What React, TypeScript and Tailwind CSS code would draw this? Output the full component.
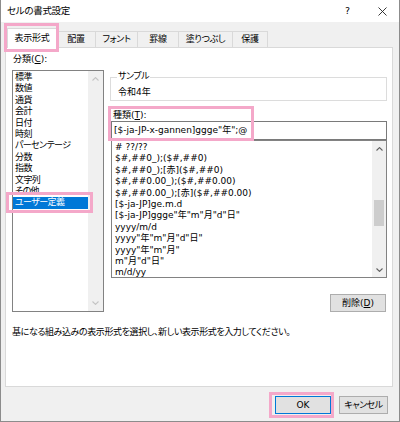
import React from "react";

const F = "font-['DejaVu_Sans','Noto_Sans_CJK_JP',sans-serif] [font-feature-settings:'palt']";

function U({ c }: { c: string }) {
  return <span className="underline underline-offset-[1px] decoration-[0.8px]">{c}</span>;
}

function Chevron({ up, color }: { up: boolean; color: string }) {
  return (
    <svg width="7" height="4" viewBox="0 0 7 4" className="block">
      <polyline
        points={up ? "0.5,3.5 3.5,0.6 6.5,3.5" : "0.5,0.5 3.5,3.4 6.5,0.5"}
        fill="none"
        stroke={color}
        strokeWidth="1.1"
      />
    </svg>
  );
}

const categories = [
  "標準",
  "数値",
  "通貨",
  "会計",
  "日付",
  "時刻",
  "パーセンテージ",
  "分数",
  "指数",
  "文字列",
  "その他",
  "ユーザー定義",
];

const formats = [
  "# ??/??",
  "$#,##0_);($#,##0)",
  "$#,##0_);[赤]($#,##0)",
  "$#,##0.00_);($#,##0.00)",
  "$#,##0.00_);[赤]($#,##0.00)",
  "[$-ja-JP]ge.m.d",
  '[$-ja-JP]ggge"年"m"月"d"日"',
  "yyyy/m/d",
  'yyyy"年"m"月"d"日"',
  'yyyy"年"m"月"',
  'm"月"d"日"',
  "m/d/yy",
];

const tabs = [
  { label: "表示形式", w: "w-[50px]" },
  { label: "配置", w: "w-[40px]" },
  { label: "フォント", w: "w-[43px]" },
  { label: "罫線", w: "w-[42px]" },
  { label: "塗りつぶし", w: "w-[55px]" },
  { label: "保護", w: "w-[36px]" },
];

export default function App() {
  return (
    <div
      className={`relative w-[400px] h-[422px] bg-[#f0f0f0] border-x border-b border-[#8c8c8c] flex flex-col text-black text-[9px] ${F}`}
    >
      {/* Title bar */}
      <div className="h-[22px] bg-white flex items-center shrink-0">
        <span className="ml-[6px] text-[9.5px] leading-[12px] tracking-[-0.3px]">セルの書式設定</span>
        <span className="ml-auto text-[9.5px] leading-[12px]">?</span>
        <svg width="9" height="9" viewBox="0 0 9 9" className="ml-[28px] mr-[12px]">
          <line x1="0.5" y1="0.5" x2="8.5" y2="8.5" stroke="#222" strokeWidth="0.9" />
          <line x1="8.5" y1="0.5" x2="0.5" y2="8.5" stroke="#222" strokeWidth="0.9" />
        </svg>
      </div>

      {/* Tabs */}
      <div className="h-[25px] flex items-end pl-[6px] shrink-0 relative z-10">
        {tabs.map((t, i) =>
          i === 0 ? (
            <div
              key={t.label}
              className={`${t.w} h-[20px] -mb-px bg-white border-x border-t border-[#d9d9d9] flex items-center justify-center leading-[11px] tracking-[-0.3px]`}
            >
              {t.label}
            </div>
          ) : (
            <div
              key={t.label}
              className={`${t.w} h-[16px] -ml-px bg-[#f0f0f0] border-x border-t border-[#d9d9d9] flex items-center justify-center leading-[11px] tracking-[-0.3px]`}
            >
              {t.label}
            </div>
          )
        )}
      </div>

      {/* Tab panel */}
      <div className="ml-[4px] mr-[6px] h-[340px] bg-white border border-[#d9d9d9] shrink-0 flex flex-col">
        <div className="flex pl-[6px] pt-[5px]">
          {/* Left column */}
          <div className="w-[92px] flex flex-col">
            <div className="pl-px leading-[13px]">
              分類(<U c="C" />):
            </div>
            <div className="mt-[4px] h-[242px] border border-[#828282] flex">
              <div className="flex-1 pt-[1px] leading-[11.4px] tracking-[-0.6px]">
                {categories.map((c, i) =>
                  i === categories.length - 1 ? (
                    <div key={c} className="h-[11.4px] pl-[2px] bg-[#0078d7] text-white">
                      {c}
                    </div>
                  ) : (
                    <div key={c} className="h-[11.4px] pl-[2px]">
                      {c}
                    </div>
                  )
                )}
              </div>
              <div className="w-[15px] bg-[#f0f0f0] flex flex-col justify-between items-center py-[6px]">
                <Chevron up color="#c4c4c4" />
                <Chevron up={false} color="#c4c4c4" />
              </div>
            </div>
          </div>

          {/* Right column */}
          <div className="ml-[6px] w-[277px] flex flex-col">
            <div className="relative mt-[24px] h-[24px] border border-[#dcdcdc]">
              <span className="absolute left-[6px] -top-[7px] bg-white px-px leading-[11px] tracking-[-0.4px]">サンプル</span>
              <div className="pl-[7px] pt-[9px] leading-[11px]">令和4年</div>
            </div>
            <div className="mt-[9px] pl-[3px] leading-[11px]">
              種類(<U c="T" />):
            </div>
            <div className="ml-px h-[19px] border border-[#7a7a7a] flex items-center pl-[2px] leading-[11px] whitespace-nowrap">
              [$-ja-JP-x-gannen]ggge"年";@
            </div>
            <div className="ml-px h-[138px] border border-[#828282] flex">
              <div className="flex-1 pt-px pl-[3px] leading-[11.4px] overflow-hidden">
                {formats.map((f) => (
                  <div key={f} className="h-[11.4px] whitespace-nowrap">
                    {f}
                  </div>
                ))}
              </div>
              <div className="w-[14px] bg-[#f0f0f0] flex flex-col items-center pt-[6px] pb-[5px]">
                <Chevron up color="#606060" />
                <div className="mt-[49px] w-[10px] h-[26px] bg-[#cdcdcd]" />
                <div className="mt-auto">
                  <Chevron up={false} color="#606060" />
                </div>
              </div>
            </div>
            <button className="self-end mr-px mt-[16px] w-[56px] h-[18px] bg-[#e1e1e1] border border-[#adadad] flex items-center justify-center leading-[11px]">
              削除(<U c="D" />)
            </button>
          </div>
        </div>
        <p className="ml-[6px] mt-[15px] leading-[11.4px] tracking-[-0.4px] whitespace-nowrap">
          基になる組み込みの表示形式を選択し、新しい表示形式を入力してください。
        </p>
      </div>

      {/* Bottom buttons */}
      <div className="flex justify-end gap-[8px] pr-[11px] pt-[9px]">
        <button className="w-[56px] h-[18px] bg-[#e1e1e1] border border-[#0078d7] flex items-center justify-center leading-[11px]">
          OK
        </button>
        <button className="w-[49px] h-[18px] bg-[#e1e1e1] border border-[#adadad] flex items-center justify-center leading-[11px] tracking-[-0.5px]">
          キャンセル
        </button>
      </div>

      {/* Pink annotation boxes */}
      <div className="absolute left-[3px] top-[23px] w-[55px] h-[29px] border-[3px] border-[#f4a8c9] pointer-events-none z-20" />
      <div className="absolute left-[5px] top-[192px] w-[87px] h-[21px] border-[3px] border-[#f4a8c9] pointer-events-none z-20" />
      <div className="absolute left-[107px] top-[106px] w-[146px] h-[35px] border-[3px] border-[#f4a8c9] pointer-events-none z-20" />
      <div className="absolute left-[268px] top-[392px] w-[65px] h-[26px] border-[3px] border-[#f4a8c9] pointer-events-none z-20" />
    </div>
  );
}
